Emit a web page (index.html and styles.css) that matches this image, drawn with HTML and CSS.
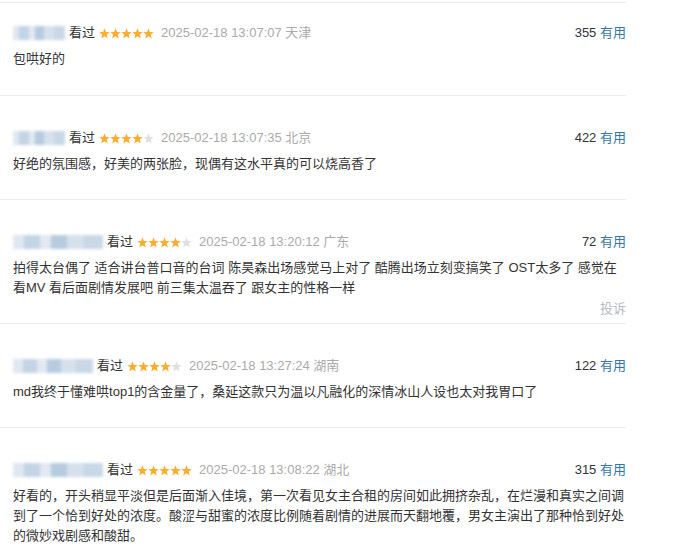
FILE: index.html
```html
<!DOCTYPE html>
<html lang="zh-CN">
<head>
<meta charset="utf-8">
<title>短评</title>
<link rel="stylesheet" href="styles.css">
</head>
<body>
<svg class="defs" width="0" height="0" aria-hidden="true">
  <symbol id="star" viewBox="0 0 11 11">
    <polygon points="5.5,0.3 6.85,4.04 10.83,4.17 7.69,6.61 8.79,10.43 5.5,8.2 2.21,10.43 3.31,6.61 0.17,4.17 4.15,4.04"/>
  </symbol>
</svg>
<div class="comments">
  <div class="item first">
    <div class="meta">
      <span class="info">
        <span class="user w45"></span>
        <span class="watched">看过</span>
        <svg class="stars" width="55" height="11" viewBox="0 0 55 11"><use href="#star" x="0" width="11" height="11" class="on"/><use href="#star" x="11" width="11" height="11" class="on"/><use href="#star" x="22" width="11" height="11" class="on"/><use href="#star" x="33" width="11" height="11" class="on"/><use href="#star" x="44" width="11" height="11" class="on"/></svg>
        <span class="time">2025-02-18 13:07:07 天津</span>
      </span>
      <span class="votes"><span class="count">355</span> <a class="useful">有用</a></span>
    </div>
    <p class="content">包哄好的</p>
    <div class="actions"><a class="report">投诉</a></div>
  </div>

  <div class="item">
    <div class="meta">
      <span class="info">
        <span class="user w50"></span>
        <span class="watched">看过</span>
        <svg class="stars" width="55" height="11" viewBox="0 0 55 11"><use href="#star" x="0" width="11" height="11" class="on"/><use href="#star" x="11" width="11" height="11" class="on"/><use href="#star" x="22" width="11" height="11" class="on"/><use href="#star" x="33" width="11" height="11" class="on"/><use href="#star" x="44" width="11" height="11" class="off"/></svg>
        <span class="time">2025-02-18 13:07:35 北京</span>
      </span>
      <span class="votes"><span class="count">422</span> <a class="useful">有用</a></span>
    </div>
    <p class="content">好绝的氛围感，好美的两张脸，现偶有这水平真的可以烧高香了</p>
    <div class="actions"><a class="report">投诉</a></div>
  </div>

  <div class="item hover">
    <div class="meta">
      <span class="info">
        <span class="user w90"></span>
        <span class="watched">看过</span>
        <svg class="stars" width="55" height="11" viewBox="0 0 55 11"><use href="#star" x="0" width="11" height="11" class="on"/><use href="#star" x="11" width="11" height="11" class="on"/><use href="#star" x="22" width="11" height="11" class="on"/><use href="#star" x="33" width="11" height="11" class="on"/><use href="#star" x="44" width="11" height="11" class="off"/></svg>
        <span class="time">2025-02-18 13:20:12 广东</span>
      </span>
      <span class="votes"><span class="count">72</span> <a class="useful">有用</a></span>
    </div>
    <p class="content">拍得太台偶了 适合讲台普口音的台词 陈昊森出场感觉马上对了 酷腾出场立刻变搞笑了 OST太多了 感觉在看MV 看后面剧情发展吧 前三集太温吞了 跟女主的性格一样</p>
    <div class="actions"><a class="report">投诉</a></div>
  </div>

  <div class="item">
    <div class="meta">
      <span class="info">
        <span class="user w80"></span>
        <span class="watched">看过</span>
        <svg class="stars" width="55" height="11" viewBox="0 0 55 11"><use href="#star" x="0" width="11" height="11" class="on"/><use href="#star" x="11" width="11" height="11" class="on"/><use href="#star" x="22" width="11" height="11" class="on"/><use href="#star" x="33" width="11" height="11" class="on"/><use href="#star" x="44" width="11" height="11" class="off"/></svg>
        <span class="time">2025-02-18 13:27:24 湖南</span>
      </span>
      <span class="votes"><span class="count">122</span> <a class="useful">有用</a></span>
    </div>
    <p class="content">md我终于懂难哄top1的含金量了，桑延这款只为温以凡融化的深情冰山人设也太对我胃口了</p>
    <div class="actions"><a class="report">投诉</a></div>
  </div>

  <div class="item">
    <div class="meta">
      <span class="info">
        <span class="user w90"></span>
        <span class="watched">看过</span>
        <svg class="stars" width="55" height="11" viewBox="0 0 55 11"><use href="#star" x="0" width="11" height="11" class="on"/><use href="#star" x="11" width="11" height="11" class="on"/><use href="#star" x="22" width="11" height="11" class="on"/><use href="#star" x="33" width="11" height="11" class="on"/><use href="#star" x="44" width="11" height="11" class="on"/></svg>
        <span class="time">2025-02-18 13:08:22 湖北</span>
      </span>
      <span class="votes"><span class="count">315</span> <a class="useful">有用</a></span>
    </div>
    <p class="content">好看的，开头稍显平淡但是后面渐入佳境，第一次看见女主合租的房间如此拥挤杂乱，在烂漫和真实之间调到了一个恰到好处的浓度。酸涩与甜蜜的浓度比例随着剧情的进展而天翻地覆，男女主演出了那种恰到好处的微妙戏剧感和酸甜。</p>
    <div class="actions"><a class="report">投诉</a></div>
  </div>
</div>
</body>
</html>
```

FILE: styles.css
```css
html, body {
  margin: 0;
  padding: 0;
  background: #fff;
}

body {
  font-family: "Liberation Sans", "Noto Sans CJK SC", sans-serif;
  font-size: 13px;
  color: #494949;
}

.defs {
  position: absolute;
  width: 0;
  height: 0;
  overflow: hidden;
}

.comments {
  width: 626px;
  margin-top: 2px;
}

.item {
  border-top: 1px solid #ebebeb;
  padding: 32px 0 4px 13px;
}

.item.first {
  padding-top: 20px;
  padding-bottom: 5px;
}

.meta {
  display: flex;
  justify-content: space-between;
  align-items: center;
  line-height: 20px;
}

.info {
  display: flex;
  align-items: center;
}

.user {
  display: inline-block;
  height: 14px;
  margin-right: 4px;
  filter: blur(1.6px);
  background: linear-gradient(to right,
    #dfe7f0 0 12%, #c3d4e5 12% 30%, #e2e9f1 30% 42%,
    #b7cbe0 42% 60%, #d6e1ec 60% 78%, #c9d8e7 78% 100%);
}

.w45 { width: 52px; }
.w50 { width: 52px; }
.w80 { width: 80px; }
.w90 { width: 90px; }

.watched {
  color: #333;
  margin-right: 4px;
}

.stars {
  display: block;
  margin-right: 7px;
}

.stars .on { fill: #ffac2d; }
.stars .off { fill: #e0e0e0; }

.time {
  color: #aaa;
}

.votes .count {
  color: #333;
}

.useful {
  color: #37a;
  text-decoration: none;
}

.content {
  margin: 6px 0 0;
  line-height: 20px;
  color: #333;
}

.actions {
  margin-top: 1px;
  line-height: 20px;
  text-align: right;
  visibility: hidden;
}

.item.hover .actions {
  visibility: visible;
}

.report {
  color: #b4bcc7;
  text-decoration: none;
}
```
